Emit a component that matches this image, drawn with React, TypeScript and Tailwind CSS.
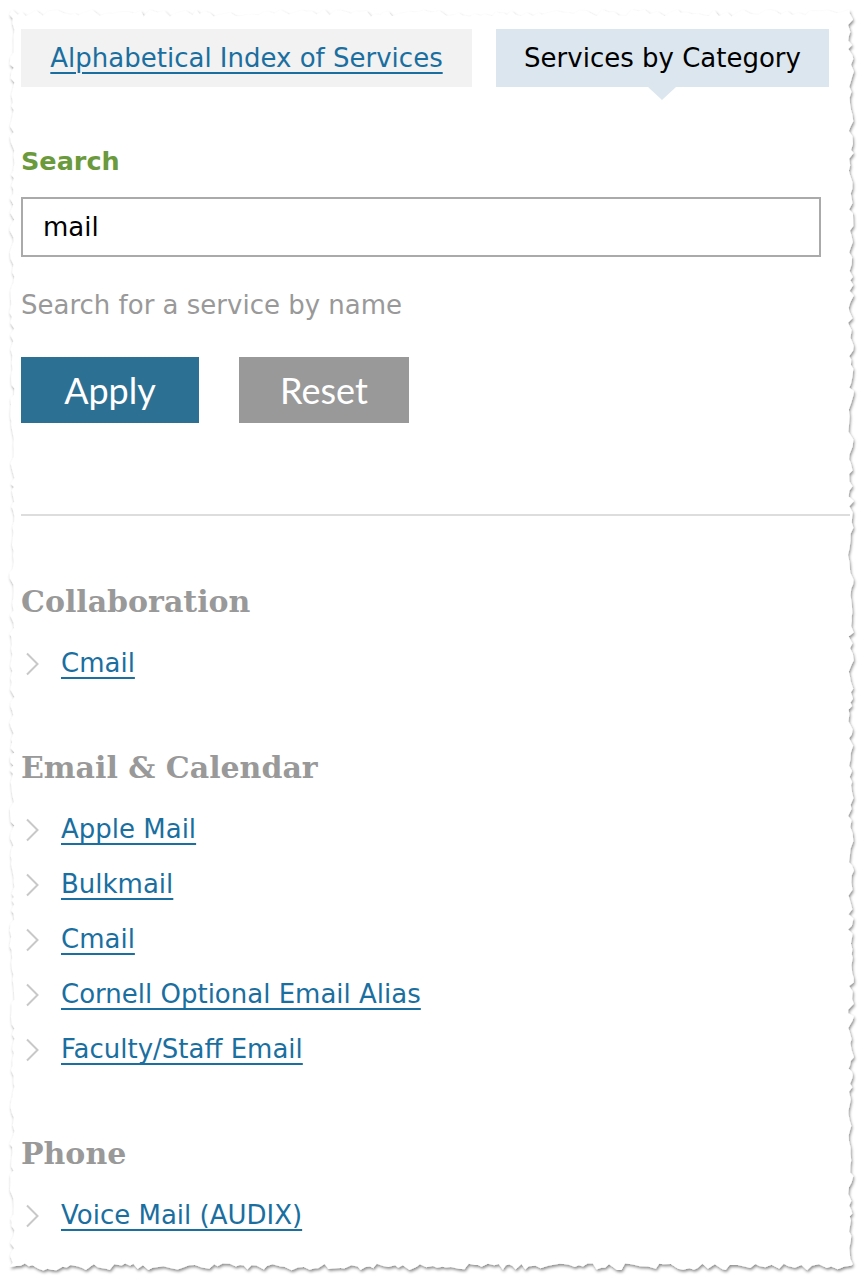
import { ReactNode } from "react";

const groups = [
  { title: "Collaboration", items: ["Cmail"] },
  {
    title: "Email & Calendar",
    items: [
      "Apple Mail",
      "Bulkmail",
      "Cmail",
      "Cornell Optional Email Alias",
      "Faculty/Staff Email",
    ],
  },
  { title: "Phone", items: ["Voice Mail (AUDIX)"] },
];

// small seeded random so the torn edge looks the same every time
const makeRand = (seed: number) => () => {
  seed = (seed * 16807) % 2147483647;
  return (seed - 1) / 2147483646;
};

const tornEdge = () => {
  const rand = makeRand(42);
  const pts: string[] = [];
  const L = 12, T = 13, R = 851, B = 1267;
  for (let x = L; x < R; x += 3 + rand() * 5) pts.push(`${x},${T + (rand() - 0.5) * 7}`);
  for (let y = T; y < B; y += 3 + rand() * 5) pts.push(`${R + (rand() - 0.5) * 6},${y}`);
  for (let x = R; x > L; x -= 3 + rand() * 5) pts.push(`${x},${B + (rand() - 0.5) * 7}`);
  for (let y = B; y > T; y -= 3 + rand() * 5) pts.push(`${L + (rand() - 0.5) * 5},${y}`);
  return pts.join(" ");
};

const Paper = () => (
  <svg className="absolute inset-0" width="864" height="1280">
    <defs>
      <filter id="shadow" x="-5%" y="-5%" width="110%" height="110%">
        <feDropShadow dx="1" dy="2" stdDeviation="1.6" floodColor="#000" floodOpacity="0.45" />
      </filter>
    </defs>
    <polygon points={tornEdge()} fill="#fff" filter="url(#shadow)" />
  </svg>
);

const Chevron = () => (
  <svg width="14" height="24" viewBox="0 0 14 24" className="ml-[4px] shrink-0">
    <path d="M2 1.5 L12.5 12 L2 22.5" fill="none" stroke="#c8c8c8" strokeWidth="2" />
  </svg>
);

const Link = ({ children }: { children: ReactNode }) => (
  <a href="#" className="text-[#1a6fa0] underline underline-offset-[5px] decoration-[2px]">
    {children}
  </a>
);

export default function App() {
  return (
    <div className="relative w-[864px] h-[1280px] bg-white overflow-hidden font-['DejaVu_Sans',Verdana,sans-serif]">
      <Paper />
      <div className="relative pl-[21px] pt-[29px]">
        <div className="flex gap-6 text-[26px]">
          <div className="w-[451px] h-[58px] bg-[#f2f2f2] flex items-center justify-center">
            <Link>Alphabetical Index of Services</Link>
          </div>
          <div className="relative w-[333px] h-[58px] bg-[#dce6ee] flex items-center justify-center text-black">
            Services by Category
            <div className="absolute top-full left-[152px] w-0 h-0 border-l-[14px] border-r-[14px] border-t-[13px] border-l-transparent border-r-transparent border-t-[#dce6ee]" />
          </div>
        </div>

        <div className="mt-[59px] h-[30px] leading-[30px] text-[25.5px] font-bold text-[#6b9a3c]">Search</div>
        <div className="mt-[21px] w-[800px] h-[60px] border-2 border-[#aaaaaa] flex items-center pl-[20px] text-[26px] text-black">
          mail
        </div>
        <div className="mt-[33px] h-[30px] leading-[30px] text-[26px] text-[#999999]">
          Search for a service by name
        </div>
        <div className="mt-[37px] flex gap-10 font-['Lato',sans-serif] text-[36px] text-white">
          <button className="w-[178px] h-[66px] bg-[#2c7093] flex items-center justify-center">Apply</button>
          <button className="w-[170px] h-[66px] bg-[#999999] flex items-center justify-center">Reset</button>
        </div>

        <div className="mt-[91px] w-[829px] h-[2px] bg-[#dddddd]" />

        <div className="mt-[68px] flex flex-col gap-[59px]">
          {groups.map((g) => (
            <div key={g.title}>
              <h2 className="h-[36px] leading-[36px] font-['DejaVu_Serif',Georgia,serif] font-bold text-[30px] text-[#999999]">
                {g.title}
              </h2>
              <ul className="mt-4">
                {g.items.map((item) => (
                  <li key={item} className="h-[55px] flex items-center gap-[22px] text-[26px]">
                    <Chevron />
                    <Link>{item}</Link>
                  </li>
                ))}
              </ul>
            </div>
          ))}
        </div>
      </div>
    </div>
  );
}
